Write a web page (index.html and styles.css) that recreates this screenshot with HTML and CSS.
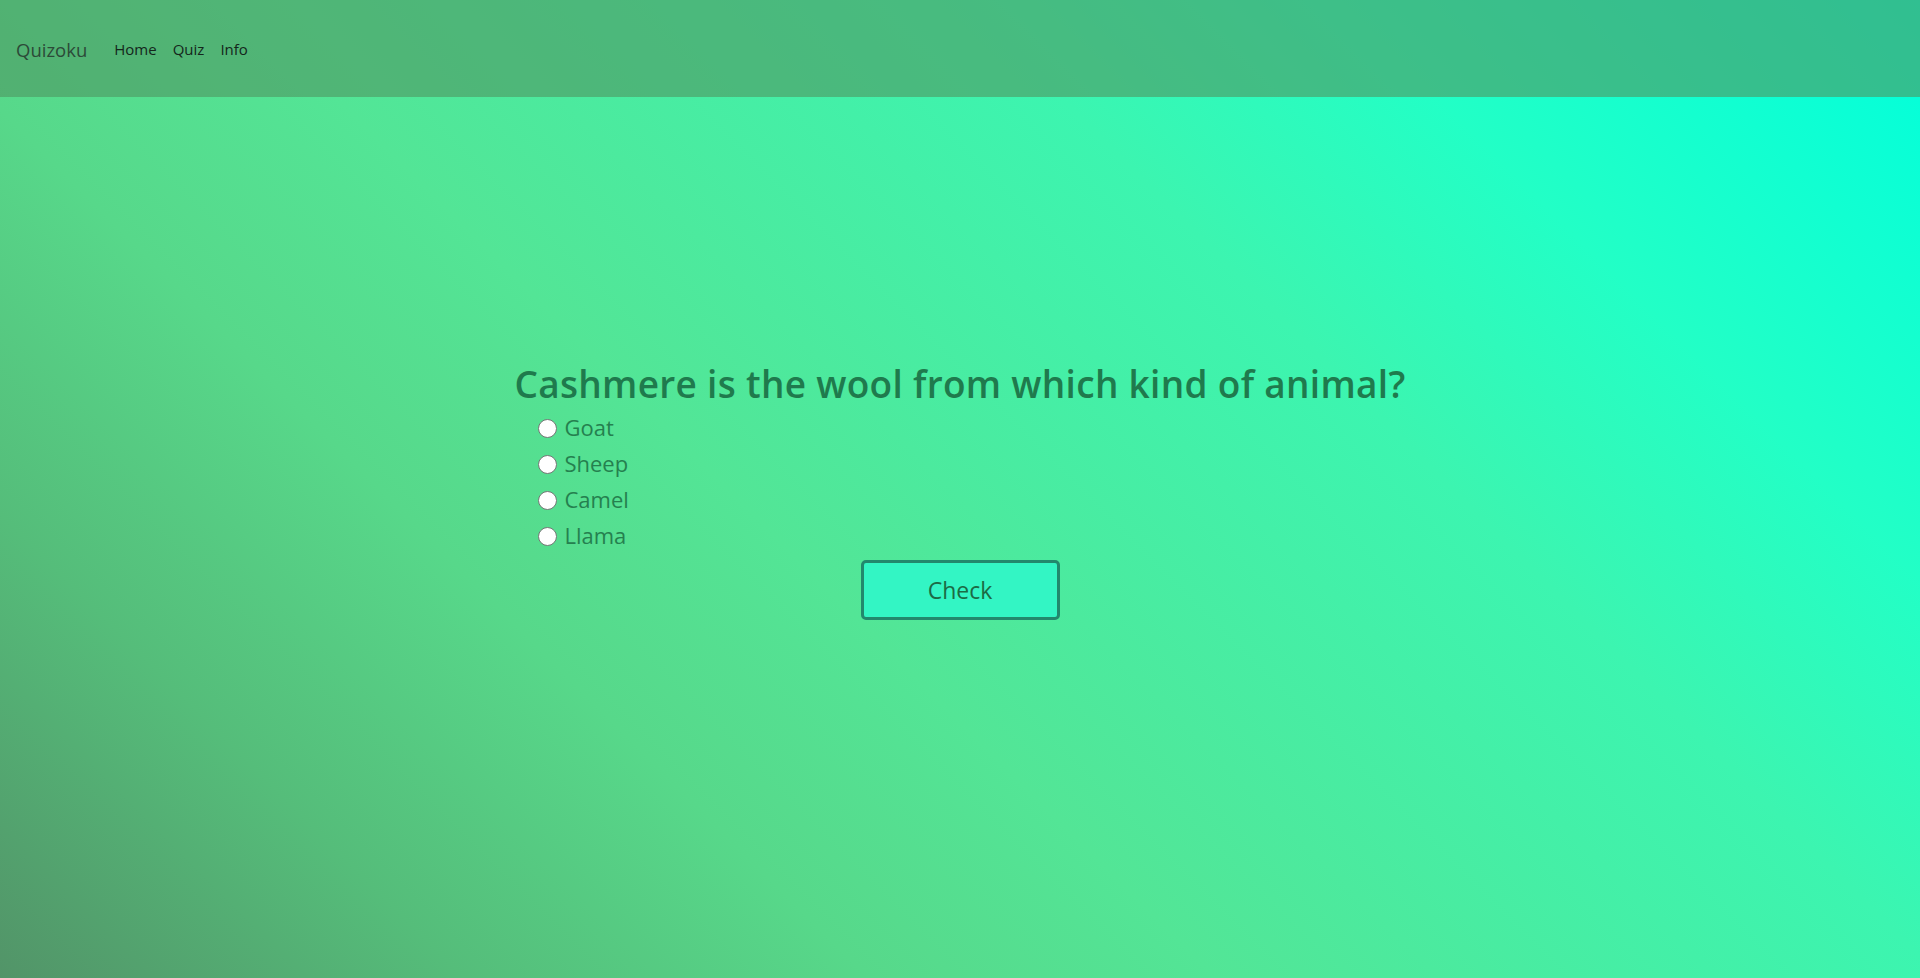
FILE: index.html
```html
<!DOCTYPE html>
<html lang="en">
<head>
<meta charset="utf-8">
<title>Quizoku</title>
<link rel="stylesheet" href="styles.css">
</head>
<body>
<header class="topbar">
  <a class="brand" href="#">Quizoku</a>
  <nav class="nav">
    <a href="#">Home</a>
    <a href="#">Quiz</a>
    <a href="#">Info</a>
  </nav>
</header>
<main class="main">
  <form class="quiz">
    <h1 class="question">Cashmere is the wool from which kind of animal?</h1>
    <div class="options">
      <label class="option"><input type="radio" name="a" value="goat"><span>Goat</span></label>
      <label class="option"><input type="radio" name="a" value="sheep"><span>Sheep</span></label>
      <label class="option"><input type="radio" name="a" value="camel"><span>Camel</span></label>
      <label class="option"><input type="radio" name="a" value="llama"><span>Llama</span></label>
    </div>
    <div class="actions">
      <button type="button" class="check">Check</button>
    </div>
  </form>
</main>
</body>
</html>
```

FILE: styles.css
```css
html, body {
  margin: 0;
  padding: 0;
  height: 100%;
}
body {
  font-family: "Open Sans", "Noto Sans", "Liberation Sans", sans-serif;
  background: linear-gradient(45deg, #529468 0%, #55bd7a 16%, #57d88a 30%, #53e596 42%, #3cf5b0 67%, #22ffc6 80%, #00ffdc 100%);
  min-height: 978px;
}
.topbar {
  height: 97px;
  display: flex;
  align-items: center;
  padding-left: 16px;
  box-sizing: border-box;
  background: rgba(79, 152, 98, 0.62);
}
.brand {
  font-size: 18.5px;
  color: #2c4a38;
  text-decoration: none;
  margin-top: 2px;
}
.nav {
  display: flex;
  gap: 16px;
  margin-left: 27px;
}
.nav a {
  font-size: 15px;
  color: #14261b;
  text-decoration: none;
}
.main {
  display: flex;
  justify-content: center;
  padding-top: 265px;
}
.quiz {
  display: flex;
  flex-direction: column;
}
.question {
  margin: 0;
  font-size: 37px;
  line-height: 44px;
  letter-spacing: 0.3px;
  font-weight: 600;
  color: #1f7a4d;
}
.options {
  display: flex;
  flex-direction: column;
  padding-left: 24px;
  margin-top: 3px;
}
.option {
  display: flex;
  align-items: center;
  height: 36px;
  font-size: 22px;
  color: #25804f;
}
.option input {
  appearance: none;
  -webkit-appearance: none;
  width: 19px;
  height: 19px;
  margin: 3px 7px 0 0;
  border: 1px solid #767676;
  border-radius: 50%;
  background: #fff;
  box-sizing: border-box;
}
.actions {
  display: flex;
  justify-content: center;
  margin-top: 7px;
}
.check {
  width: 199px;
  height: 60px;
  border: 3px solid #22886d;
  border-radius: 5px;
  background: #33f5c4;
  color: #1c6a44;
  font-family: "Open Sans", "Noto Sans", "Liberation Sans", sans-serif;
  font-size: 23px;
}
```
